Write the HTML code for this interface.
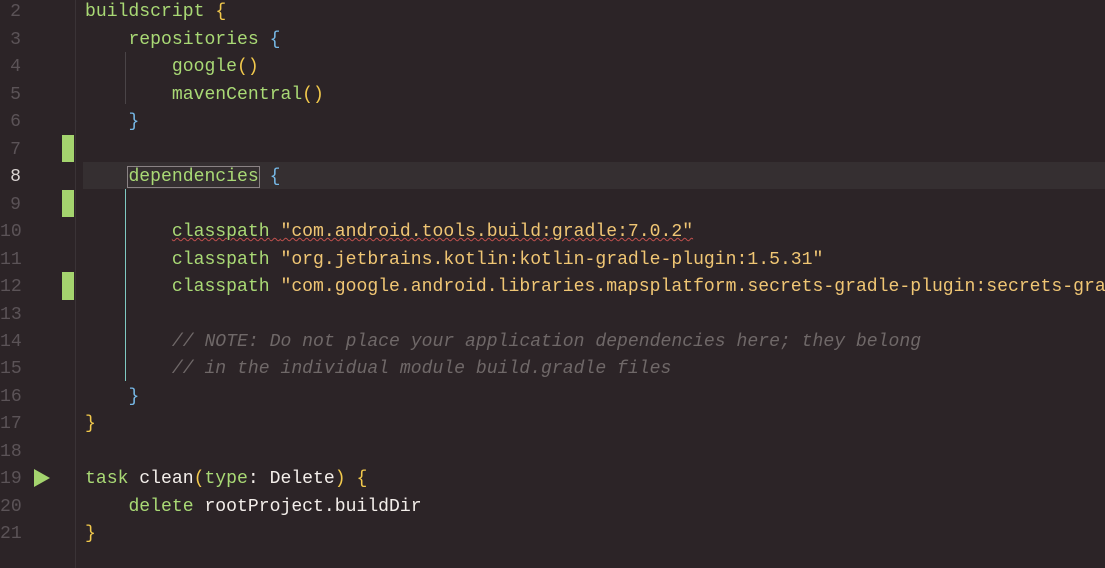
<!DOCTYPE html>
<html><head><meta charset="utf-8"><style>
html,body{margin:0;padding:0;}
body{width:1105px;height:568px;background:#2c2427;overflow:hidden;position:relative;font-family:"Liberation Mono","DejaVu Sans Mono",monospace;font-size:18.1px;}
.ln{position:absolute;left:0;width:21px;text-align:right;color:#5b5357;height:27.47px;line-height:27.47px;margin-top:2px}
.l{position:absolute;left:85px;right:0;overflow:hidden;white-space:pre;height:27.47px;line-height:27.47px;color:#f3eeea;margin-top:2px}
.g{color:#a9d975}.s{color:#f0c674}.y{color:#f2c94c}.b{color:#76b8e6}.w{color:#f3eeea}
.c{color:#6f6868;font-style:italic}
.chg{position:absolute;left:62px;width:12px;background:#a4d46e;height:27.5px}
</style></head><body>
<div style="position:absolute;left:83px;right:0;top:161.6px;height:27.5px;background:#352f31"></div>
<div style="position:absolute;left:75px;top:0;width:1px;height:568px;background:#3a3336"></div>
<div style="position:absolute;left:125px;top:52px;width:1px;height:52px;background:#4a4447"></div>
<div style="position:absolute;left:125px;top:189px;width:1px;height:192px;background:#7fc9c2"></div>
<div class="chg" style="top:134.6px"></div>
<div class="chg" style="top:189.5px"></div>
<div class="chg" style="top:272px"></div>
<svg style="position:absolute;left:33px;top:468px" width="18" height="20"><polygon points="1,1 17,10 1,19" fill="#a4d46e"/></svg>

<div class="ln" style="top:-2.7px">2</div>
<div class="ln" style="top:24.8px">3</div>
<div class="ln" style="top:52.2px">4</div>
<div class="ln" style="top:79.7px">5</div>
<div class="ln" style="top:107.2px">6</div>
<div class="ln" style="top:134.6px">7</div>
<div class="ln" style="top:162.1px;color:#d8d2d0">8</div>
<div class="ln" style="top:189.6px">9</div>
<div class="ln" style="top:217px">10</div>
<div class="ln" style="top:244.5px">11</div>
<div class="ln" style="top:272px">12</div>
<div class="ln" style="top:299.5px">13</div>
<div class="ln" style="top:326.9px">14</div>
<div class="ln" style="top:354.4px">15</div>
<div class="ln" style="top:381.9px">16</div>
<div class="ln" style="top:409.3px">17</div>
<div class="ln" style="top:436.8px">18</div>
<div class="ln" style="top:464.3px">19</div>
<div class="ln" style="top:491.7px">20</div>
<div class="ln" style="top:519.2px">21</div>

<div class="l" style="top:-2.7px"><span class="g">buildscript</span> <span class="y">{</span></div>
<div class="l" style="top:24.8px">    <span class="g">repositories</span> <span class="b">{</span></div>
<div class="l" style="top:52.2px">        <span class="g">google</span><span class="y">()</span></div>
<div class="l" style="top:79.7px">        <span class="g">mavenCentral</span><span class="y">()</span></div>
<div class="l" style="top:107.2px">    <span class="b">}</span></div>
<div class="l" style="top:162.1px">    <span class="g" style="outline:1px solid #8a8284;outline-offset:0px">dependencies</span> <span class="b">{</span></div>
<div class="l" style="top:217px">        <span class="g" style="text-decoration:underline wavy #c0504d;text-decoration-thickness:1px">classpath</span><span style="text-decoration:underline wavy #c0504d;text-decoration-thickness:1px"> <span class="s">"com.android.tools.build:gradle:7.0.2"</span></span></div>
<div class="l" style="top:244.5px">        <span class="g">classpath</span> <span class="s">"org.jetbrains.kotlin:kotlin-gradle-plugin:1.5.31"</span></div>
<div class="l" style="top:272px">        <span class="g">classpath</span> <span class="s">"com.google.android.libraries.mapsplatform.secrets-gradle-plugin:secrets-gradle-plugin:2.0.0"</span></div>
<div class="l" style="top:326.9px">        <span class="c">// NOTE: Do not place your application dependencies here; they belong</span></div>
<div class="l" style="top:354.4px">        <span class="c">// in the individual module build.gradle files</span></div>
<div class="l" style="top:381.9px">    <span class="b">}</span></div>
<div class="l" style="top:409.3px"><span class="y">}</span></div>
<div class="l" style="top:464.3px"><span class="g">task</span> clean<span class="y">(</span><span class="g">type</span>: Delete<span class="y">)</span> <span class="y">{</span></div>
<div class="l" style="top:491.7px">    <span class="g">delete</span> rootProject.buildDir</div>
<div class="l" style="top:519.2px"><span class="y">}</span></div>
</body></html>
